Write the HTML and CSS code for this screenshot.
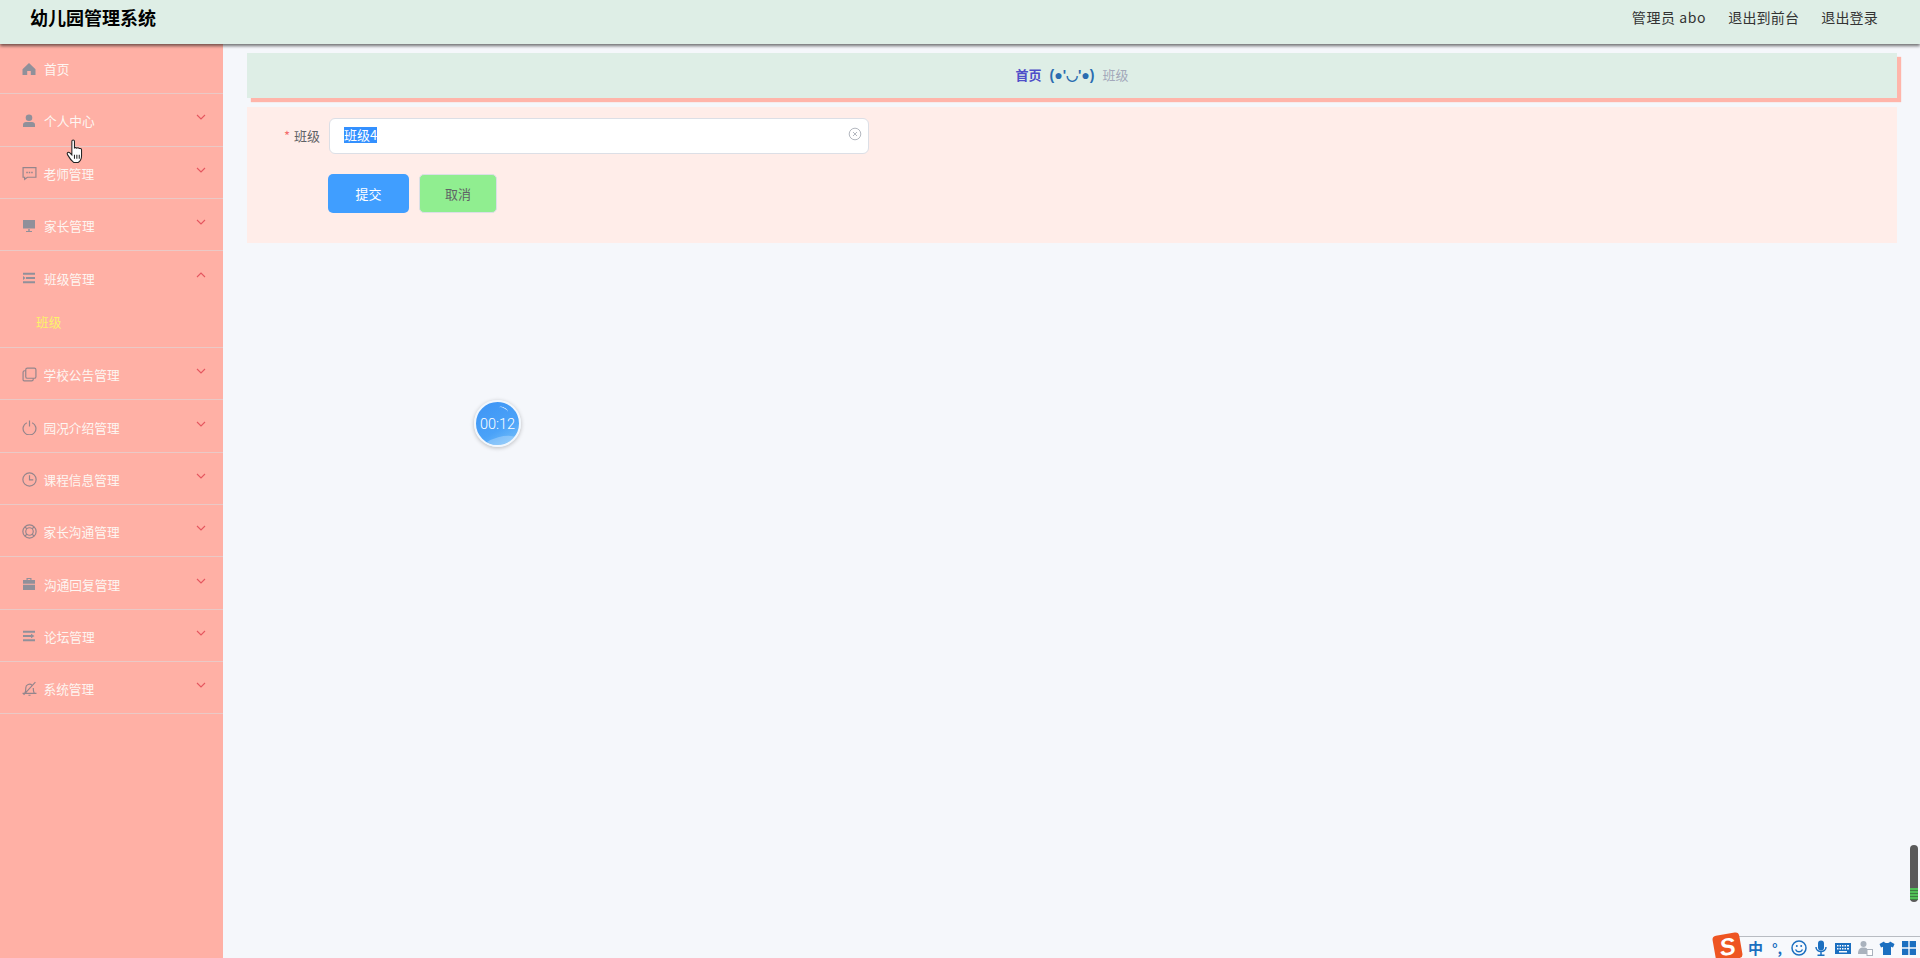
FILE: index.html
```html
<!DOCTYPE html>
<html lang="zh">
<head>
    <meta charset="UTF-8">
    <title>幼儿园管理系统</title>
    <link rel="stylesheet" href="styles.css">
</head>
<body>
    <div class="top-bar">
        <div class="site-title">幼儿园管理系统</div>
        <div class="top-links">
            <span class="top-user">管理员 abo</span>
            <span>退出到前台</span>
            <span>退出登录</span>
        </div>
    </div>

    <div class="page">
        <div class="sidebar">
            <div class="menu-item">
                <svg class="menu-icon" viewBox="0 0 14 14"><path d="M7 1 0.500 7.200V13h4.700V9h3.600v4h4.700V7.200z"/></svg>
                <span>首页</span>
            </div>
            <div class="menu-item">
                <svg class="menu-icon" viewBox="0 0 14 14"><circle cx="7" cy="3.800" r="3.300"/><path d="M1 13v-2.200C1 9 2.400 8 4 8h6c1.600 0 3 1 3 2.800V13z"/></svg>
                <span>个人中心</span>
                <svg class="arrow" viewBox="0 0 10 6"><path d="M1 1l4 4 4-4"/></svg>
            </div>
            <div class="menu-item">
                <svg class="menu-icon line" viewBox="0 0 14 14"><path d="M1 1.500h12v9H5l-2.500 2v-2H1z"/><path class="dots" d="M4 6h1.400M6.300 6h1.400M8.600 6H10"/></svg>
                <span>老师管理</span>
                <svg class="arrow" viewBox="0 0 10 6"><path d="M1 1l4 4 4-4"/></svg>
            </div>
            <div class="menu-item">
                <svg class="menu-icon" viewBox="0 0 14 14"><path d="M1 1h12v8.500H1zM4 12h6v1H4zM6.300 10h1.400v2H6.300z"/></svg>
                <span>家长管理</span>
                <svg class="arrow" viewBox="0 0 10 6"><path d="M1 1l4 4 4-4"/></svg>
            </div>
            <div class="menu-item open">
                <div class="menu-head">
                    <svg class="menu-icon" viewBox="0 0 14 14"><path d="M1 1.800h12v2H1zM4 6h9v2H4zM1 10.200h12v2H1zM1 5l2.500 2L1 9z"/></svg>
                    <span>班级管理</span>
                    <svg class="arrow" viewBox="0 0 10 6"><path d="M1 5l4-4 4 4"/></svg>
                </div>
                <div class="sub-item">班级</div>
            </div>
            <div class="menu-item">
                <svg class="menu-icon line" viewBox="0 0 14 14"><rect x="3.500" y="1" width="9.500" height="9.500" rx="1.500"/><path d="M3.500 3.500H2.500A1.500 1.500 0 0 0 1 5v7a1 1 0 0 0 1 1h7a1.500 1.500 0 0 0 1.500-1.500v-1"/></svg>
                <span>学校公告管理</span>
                <svg class="arrow" viewBox="0 0 10 6"><path d="M1 1l4 4 4-4"/></svg>
            </div>
            <div class="menu-item">
                <svg class="menu-icon line" viewBox="0 0 14 14"><path d="M4.500 2.500a6 6 0 1 0 5 0M7 0.500V6"/></svg>
                <span>园况介绍管理</span>
                <svg class="arrow" viewBox="0 0 10 6"><path d="M1 1l4 4 4-4"/></svg>
            </div>
            <div class="menu-item">
                <svg class="menu-icon line" viewBox="0 0 14 14"><circle cx="7" cy="7" r="6.200"/><path d="M7 3v4.300h3.500"/></svg>
                <span>课程信息管理</span>
                <svg class="arrow" viewBox="0 0 10 6"><path d="M1 1l4 4 4-4"/></svg>
            </div>
            <div class="menu-item">
                <svg class="menu-icon line" viewBox="0 0 14 14"><circle cx="7" cy="7" r="6.200"/><circle cx="7" cy="7" r="3.500"/><path d="M2.800 2.800l1.800 1.800M11.200 2.800 9.400 4.600M2.800 11.200l1.800-1.800M11.200 11.200 9.400 9.400"/></svg>
                <span>家长沟通管理</span>
                <svg class="arrow" viewBox="0 0 10 6"><path d="M1 1l4 4 4-4"/></svg>
            </div>
            <div class="menu-item">
                <svg class="menu-icon" viewBox="0 0 14 14"><path d="M4.500 3V1h5v2H13v3.800H1V3zM5.700 3h2.600V2.100H5.700zM1 7.800h12V13H1z"/></svg>
                <span>沟通回复管理</span>
                <svg class="arrow" viewBox="0 0 10 6"><path d="M1 1l4 4 4-4"/></svg>
            </div>
            <div class="menu-item">
                <svg class="menu-icon" viewBox="0 0 14 14"><path d="M1 1.800h12v2H1zM1 6h8V4.800L12.500 7 9 9.200V8H1zM1 10.200h12v2H1z"/></svg>
                <span>论坛管理</span>
                <svg class="arrow" viewBox="0 0 10 6"><path d="M1 1l4 4 4-4"/></svg>
            </div>
            <div class="menu-item">
                <svg class="menu-icon line" viewBox="0 0 14 14"><path d="M0.500 11.500h13M2.500 11.500c1.300-1.500 1-3.500 1-5a3.500 3.500 0 0 1 6-2.400M10.500 6.500c0 1.500 0 3.500 1 5M6 13.300h2M1.500 13 12.500 1"/></svg>
                <span>系统管理</span>
                <svg class="arrow" viewBox="0 0 10 6"><path d="M1 1l4 4 4-4"/></svg>
            </div>
        </div>

        <div class="content">
            <div class="breadcrumb">
                <span class="crumb-home">首页</span>
                <span class="crumb-sep">(●'◡'●)</span>
                <span class="crumb-now">班级</span>
            </div>
            <div class="form-panel">
                <div class="form-row">
                    <div class="form-label"><i>*</i> 班级</div>
                    <div class="form-input">
                        <span class="selected">班级4</span>
                        <svg class="clear-icon" viewBox="0 0 14 14"><circle cx="7" cy="7" r="5.800"/><path d="M5 5l4 4M9 5l-4 4"/></svg>
                    </div>
                </div>
                <div class="form-buttons">
                    <div class="btn btn-submit">提交</div>
                    <div class="btn btn-cancel">取消</div>
                </div>
            </div>
        </div>
    </div>

    <div class="timer">00:12</div>

    <svg class="hand-cursor" viewBox="0 0 18 24">
        <path d="M5.500 2.200c0-1.600 2.500-1.600 2.500 0V9c0-1 2.200-1 2.300.2 0-1 2.200-1 2.300.4 0-.8 2.200-.7 2.200.8v5.600c0 2.700-1.600 5.500-3.300 6.500H7.200C5.500 21.200 3 18 1.300 15c-1-1.800 1-3 2.300-1.700l1.900 2z"/>
        <path d="M8 15v4M10.300 15v4M12.600 15v4"/>
    </svg>

    <div class="level-meter"><div class="level-green"></div></div>

    <div class="ime-bar">
        <div class="ime-logo">S</div>
        <span class="ime-zh">中</span>
        <span class="ime-punct">°,</span>
        <svg class="ime-icon" viewBox="0 0 16 16"><circle class="ime-line" cx="8" cy="8" r="7"/><circle cx="5.800" cy="6" r="1"/><circle cx="10.200" cy="6" r="1"/><path class="ime-line" d="M4.500 9.500c1.500 3 5.500 3 7 0"/></svg>
        <svg class="ime-icon" viewBox="0 0 16 16"><rect x="5" y="0.500" width="6" height="10" rx="3"/><path class="ime-line" d="M3 7c0 6 10 6 10 0M8 12v3M4.500 15.200h7"/></svg>
        <svg class="ime-icon" viewBox="0 0 16 16"><path fill-rule="evenodd" d="M0 3h16v11H0zM2 5v1.500h1.500V5zM4.500 5v1.500H6V5zM7 5v1.500h1.500V5zM9.500 5v1.500H11V5zM12 5v1.500h2V5zM2 8v1.500h1.500V8zM4.500 8v1.500H6V8zM7 8v1.500h1.500V8zM9.500 8v1.500H11V8zM12 8v1.500h2V8zM4 11v1.500h8V11z"/></svg>
        <svg class="ime-icon ime-grey" viewBox="0 0 16 16"><circle cx="6.500" cy="4" r="3"/><path d="M1 14c0-5 2-6.500 5.500-6.500 1.500 0 2.500.3 3.500 1V14z"/><rect x="10" y="9.500" width="5.500" height="6" fill="#fff" stroke="#a9b2bd"/></svg>
        <svg class="ime-icon" viewBox="0 0 16 16"><path d="M5 1.500 0.500 4 2 7.500l2-.7V15h8V6.800l2 .7L15.500 4 11 1.500c-.5 2-5.500 2-6 0z"/></svg>
        <svg class="ime-icon" viewBox="0 0 16 16"><path d="M1 1h6.300v6.300H1zM8.700 1H15v6.300H8.700zM1 8.700h6.300V15H1zM8.700 8.700H15V15H8.700z"/></svg>
    </div>
</body>
</html>
```

FILE: styles.css
```css
* {
    box-sizing: border-box;
}
html, body {
    margin: 0;
    height: 958px;
    overflow: hidden;
}
body {
    font-family: "Noto Sans CJK SC", "Liberation Sans", sans-serif;
    background-color: #f5f7fb;
    position: relative;
}

/* top bar */
.top-bar {
    height: 44px;
    background-color: #deeee6;
    box-shadow: 0 2px 3px rgba(0,0,0,0.55);
    display: flex;
    align-items: center;
    justify-content: space-between;
    padding: 0 42px 11px 30px;
    position: relative;
    z-index: 2;
}
.site-title {
    font-size: 18px;
    font-weight: bold;
    color: #000;
}
.top-links {
    display: flex;
    gap: 22px;
    font-size: 14px;
    letter-spacing: 0.2px;
    color: #333;
}
.top-user {
    letter-spacing: 0.6px;
}

.page {
    display: flex;
    height: 914px;
}

/* sidebar */
.sidebar {
    width: 223px;
    margin-top: -2px;
    background-color: #ffb0a5;
    flex-shrink: 0;
}
.menu-item, .menu-head {
    display: flex;
    align-items: center;
    height: 52.3px;
    padding: 2px 0 0 22px;
    font-size: 12.7px;
    color: #fdf6f2;
    border-bottom: 1px solid #eac9c6;
}
.menu-item.open {
    display: block;
    height: 97px;
    padding: 0;
}
.menu-head {
    border-bottom: none;
    height: 52px;
}
.sub-item {
    padding: 0 0 0 36px;
    height: 44px;
    line-height: 38px;
    font-size: 12.7px;
    color: #fbf36a;
}
.menu-icon {
    width: 14px;
    height: 14px;
    margin-right: 8px;
    fill: #90909a;
    flex-shrink: 0;
}
.menu-icon.line {
    width: 15px;
    height: 15px;
    margin: 0 7px 0 -0.5px;
    fill: none;
    stroke: #94858c;
    stroke-width: 1.100;
}
.menu-icon .dots {
    stroke-width: 1.300;
}
.arrow {
    width: 10px;
    height: 6px;
    margin-left: auto;
    margin-right: 17px;
    margin-top: -7px;
    fill: none;
    stroke: #e5565f;
    stroke-width: 1.100;
}

/* content */
.content {
    flex: 1;
    padding: 9px 23px 0 24px;
}
.breadcrumb {
    height: 45px;
    background-color: #deeee6;
    box-shadow: 4px 4px 1px #ffb5aa;
    display: flex;
    align-items: center;
    justify-content: center;
    gap: 8px;
    padding-bottom: 2px;
    font-size: 13px;
}
.crumb-home {
    color: #4f4fc9;
    font-weight: bold;
}
.crumb-sep {
    color: #2a6cb0;
    font-family: "Liberation Sans", sans-serif;
    font-size: 14px;
    font-weight: bold;
}
.crumb-now {
    color: #a3a8ba;
}
.form-panel {
    margin-top: 9px;
    height: 136px;
    background-color: #ffede9;
    padding: 11px 0 0 0;
}
.form-row {
    display: flex;
    align-items: center;
}
.form-label {
    width: 73px;
    padding-bottom: 2px;
    text-align: right;
    font-size: 13px;
    color: #606266;
}
.form-label i {
    color: #f56c6c;
    font-style: normal;
    margin-right: 1px;
}
.form-input {
    width: 540px;
    height: 36px;
    margin-left: 9px;
    background: #fff;
    border: 1px solid #dcdfe6;
    border-radius: 6px;
    padding: 0 14px 2px;
    display: flex;
    align-items: center;
    justify-content: space-between;
    font-size: 13px;
    color: #606266;
}
.selected {
    background-color: #3390ff;
    color: #fff;
    line-height: 16px;
}
.clear-icon {
    width: 14px;
    height: 14px;
    margin: -3px -8px 0 0;
    fill: none;
    stroke: #b4b8c0;
    stroke-width: 1;
}
.form-buttons {
    display: flex;
    gap: 10px;
    margin: 20px 0 0 81px;
}
.btn {
    height: 39px;
    border-radius: 5px;
    display: flex;
    align-items: center;
    justify-content: center;
    font-size: 13px;
}
.btn-submit {
    width: 81px;
    background-color: #409eff;
    color: #fff;
}
.btn-cancel {
    width: 78px;
    background-color: #90ee90;
    border: 1px solid #dcdfe6;
    color: #606266;
}

/* things lying over the page */
.timer {
    position: absolute;
    left: 474px;
    top: 400px;
    width: 47px;
    height: 47px;
    border-radius: 50%;
    border: 2px solid #f1f7fd;
    background: linear-gradient(150deg, #3d94f5, #4aa2f8 60%, #7cc4fa);
    box-shadow: 0 1px 4px rgba(0,0,0,0.25);
    color: #fff;
    font-family: Roboto, sans-serif;
    font-size: 14.5px;
    font-weight: 300;
    line-height: 45px;
    text-align: center;
    overflow: hidden;
}
.timer::before {
    content: "";
    position: absolute;
    left: 22px;
    top: 5px;
    width: 10px;
    height: 5px;
    border-top: 1px solid rgba(255,255,255,0.7);
    border-radius: 50%;
    transform: rotate(25deg);
}
.timer::after {
    content: "";
    position: absolute;
    left: 6px;
    top: 35px;
    width: 36px;
    height: 14px;
    background-color: rgba(255,255,255,0.25);
    border-radius: 50%;
    transform: rotate(-15deg);
}
.hand-cursor {
    position: absolute;
    left: 66px;
    top: 139px;
    width: 19px;
    height: 25px;
    fill: #fff;
    stroke: #222;
    stroke-width: 1;
}
.level-meter {
    position: absolute;
    left: 1910px;
    top: 845px;
    width: 8px;
    height: 57px;
    border-radius: 4px;
    background-color: #5a5a5a;
    padding-top: 43px;
    overflow: hidden;
}
.level-green {
    height: 12px;
    background: repeating-linear-gradient(#4fbf57 0 2px, #3c7d42 2px 3px);
}
.ime-bar {
    position: absolute;
    left: 1738px;
    right: 0;
    bottom: 0;
    height: 22px;
    background-color: #f7f9fc;
    border-top: 1px solid #b8bcc2;
    display: flex;
    align-items: center;
    gap: 6px;
    padding-left: 10px;
    color: #1b6fc0;
}
.ime-logo {
    position: absolute;
    left: -24px;
    top: -3px;
    width: 27px;
    height: 26px;
    border-radius: 4px;
    background-color: #ee5522;
    color: #fff;
    font: italic bold 24px/26px "Liberation Sans", sans-serif;
    text-align: center;
    transform: rotate(-10deg);
}
.ime-zh {
    font-size: 15px;
    font-weight: bold;
    width: 15px;
}
.ime-punct {
    font-size: 14px;
    font-weight: bold;
    width: 16px;
    text-align: center;
}
.ime-icon {
    width: 16px;
    height: 16px;
    fill: #1b6fc0;
}
.ime-line {
    fill: none;
    stroke: #1b6fc0;
    stroke-width: 1.500;
}
.ime-grey {
    fill: #a9b2bd;
}
```
